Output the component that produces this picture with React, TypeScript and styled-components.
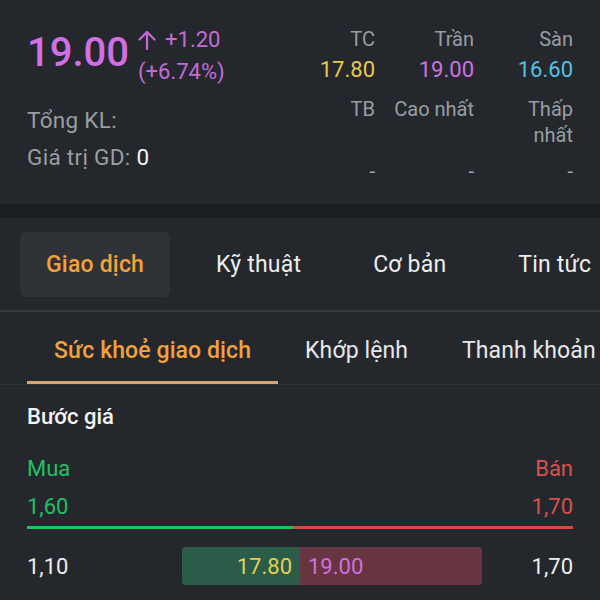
import React from 'react';
import styled, { createGlobalStyle } from 'styled-components';

const Global = createGlobalStyle`
  body {
    margin: 0;
    background: #24282d;
    font-family: Roboto, "Liberation Sans", sans-serif;
  }
`;

const Page = styled.div`
  width: 600px;
  height: 600px;
  overflow: hidden;
  background: #24282d;
  color: #e8e9ea;
`;

const Top = styled.div`
  height: 204px;
  box-sizing: border-box;
  padding: 24px 27px 0 27px;
  display: flex;
  justify-content: space-between;
`;

const PriceRow = styled.div`
  display: flex;
  align-items: flex-start;
`;

const BigPrice = styled.div`
  margin-top: 5px;
  font-size: 40px;
  line-height: 48px;
  font-weight: 500;
  color: #d36fe6;
`;

const Change = styled.div`
  margin-left: 9px;
  font-size: 22px;
  line-height: 32px;
  color: #c56ad8;
`;

const ChangeLine = styled.div`
  display: flex;
  align-items: center;
  gap: 9px;
`;

const InfoLine = styled.div<{ $first?: boolean }>`
  margin-top: ${(p) => (p.$first ? '14px' : '0')};
  font-size: 22.5px;
  line-height: 37px;
  letter-spacing: 0.3px;
  color: #9a9ea3;
`;

const White = styled.span`
  color: #f2f2f2;
`;

const Stats = styled.div`
  margin-top: 2px;
  display: grid;
  grid-template-columns: repeat(3, 86px);
  column-gap: 13px;
  text-align: right;
  align-content: start;
`;

const Label = styled.div<{ $gap?: number }>`
  margin-top: ${(p) => p.$gap ?? 0}px;
  font-size: 20px;
  line-height: 26px;
  color: #9a9ea3;
`;

const Value = styled.div<{ $color: string }>`
  margin-top: 3px;
  font-size: 22px;
  line-height: 30px;
  color: ${(p) => p.$color};
`;

const Dash = styled.div`
  margin-top: 10px;
  font-size: 20px;
  line-height: 26px;
  color: #a5a8ac;
`;

const Band = styled.div`
  height: 14px;
  background: #1b1e22;
`;

const MainTabs = styled.div`
  display: flex;
  gap: 20px;
  padding: 14px 0 13px 20px;
  border-bottom: 2px solid #353a41;
  white-space: nowrap;
`;

const MainTab = styled.div<{ $active?: boolean }>`
  height: 65px;
  padding: 0 26px;
  display: flex;
  align-items: center;
  border-radius: 6px;
  font-size: 23px;
  letter-spacing: 0.2px;
  font-weight: ${(p) => (p.$active ? 500 : 400)};
  color: ${(p) => (p.$active ? '#f2a23a' : '#eceded')};
  background: ${(p) => (p.$active ? '#2f3337' : 'transparent')};
`;

const SubTabs = styled.div`
  display: flex;
  padding-left: 27px;
  border-bottom: 1px solid #30353b;
  white-space: nowrap;
`;

const SubTab = styled.div<{ $active?: boolean }>`
  padding: 26px 27px 17px;
  font-size: 23px;
  line-height: 26px;
  letter-spacing: 0.1px;
  font-weight: ${(p) => (p.$active ? 500 : 400)};
  color: ${(p) => (p.$active ? '#f2a23a' : '#e6e7e8')};
  border-bottom: 3px solid ${(p) => (p.$active ? '#d7a472' : 'transparent')};
`;

const Content = styled.div`
  padding: 0 27px;
`;

const Heading = styled.div`
  margin-top: 18px;
  font-size: 22px;
  line-height: 28px;
  font-weight: 500;
  color: #f4f4f4;
`;

const SideRow = styled.div<{ $gap: number }>`
  margin-top: ${(p) => p.$gap}px;
  display: flex;
  justify-content: space-between;
  font-size: 22px;
  line-height: 28px;
`;

const Buy = styled.span`
  color: #22c063;
`;

const Sell = styled.span`
  color: #d8514c;
`;

const Balance = styled.div`
  margin-top: 5px;
  height: 3px;
  display: flex;
`;

const BalancePart = styled.div<{ $color: string }>`
  background: ${(p) => p.$color};
`;

const BookRow = styled.div`
  margin-top: 18px;
  display: grid;
  grid-template-columns: 155px 300px 1fr;
  align-items: center;
  font-size: 22px;
  color: #eeeeee;
`;

const EndValue = styled.div<{ $right?: boolean }>`
  text-align: ${(p) => (p.$right ? 'right' : 'left')};
`;

const Bar = styled.div`
  height: 38px;
  display: flex;
  border-radius: 3px;
  overflow: hidden;
`;

const BarPart = styled.div<{ $bg: string; $color: string; $right?: boolean }>`
  display: flex;
  align-items: center;
  justify-content: ${(p) => (p.$right ? 'flex-end' : 'flex-start')};
  padding: 0 8px;
  box-sizing: border-box;
  background: ${(p) => p.$bg};
  color: ${(p) => p.$color};
`;

const UpArrow = () => (
  <svg width="18" height="20" viewBox="0 0 18 20" fill="none" stroke="#c56ad8" strokeWidth="2.2" strokeLinecap="round" strokeLinejoin="round">
    <path d="M9 19V2" />
    <path d="M1.5 9.5L9 2l7.5 7.5" />
  </svg>
);

export default function App() {
  return (
    <Page>
      <Global />
      <Top>
        <div>
          <PriceRow>
            <BigPrice>19.00</BigPrice>
            <Change>
              <ChangeLine>
                <UpArrow />
                <span>+1.20</span>
              </ChangeLine>
              <div>(+6.74%)</div>
            </Change>
          </PriceRow>
          <InfoLine $first>Tổng KL:</InfoLine>
          <InfoLine>
            Giá trị GD: <White>0</White>
          </InfoLine>
        </div>
        <Stats>
          <Label>TC</Label>
          <Label>Trần</Label>
          <Label>Sàn</Label>
          <Value $color="#e9c84b">17.80</Value>
          <Value $color="#d070e3">19.00</Value>
          <Value $color="#52c1e2">16.60</Value>
          <Label $gap={11}>TB</Label>
          <Label $gap={11}>Cao nhất</Label>
          <Label $gap={11}>Thấp nhất</Label>
          <Dash>-</Dash>
          <Dash>-</Dash>
          <Dash>-</Dash>
        </Stats>
      </Top>
      <Band />
      <MainTabs>
        <MainTab $active>Giao dịch</MainTab>
        <MainTab>Kỹ thuật</MainTab>
        <MainTab>Cơ bản</MainTab>
        <MainTab>Tin tức</MainTab>
      </MainTabs>
      <SubTabs>
        <SubTab $active>Sức khoẻ giao dịch</SubTab>
        <SubTab>Khớp lệnh</SubTab>
        <SubTab>Thanh khoản</SubTab>
      </SubTabs>
      <Content>
        <Heading>Bước giá</Heading>
        <SideRow $gap={24}>
          <Buy>Mua</Buy>
          <Sell>Bán</Sell>
        </SideRow>
        <SideRow $gap={10}>
          <Buy>1,60</Buy>
          <Sell>1,70</Sell>
        </SideRow>
        <Balance>
          <BalancePart $color="#1ec264" style={{ width: `${(266 / 546) * 100}%` }} />
          <BalancePart $color="#d84a43" style={{ flex: 1 }} />
        </Balance>
        <BookRow>
          <EndValue>1,10</EndValue>
          <Bar>
            <BarPart $bg="#2b5b49" $color="#e4cf52" $right style={{ width: '118px' }}>
              17.80
            </BarPart>
            <BarPart $bg="#673540" $color="#d070e3" style={{ flex: 1 }}>
              19.00
            </BarPart>
          </Bar>
          <EndValue $right>1,70</EndValue>
        </BookRow>
      </Content>
    </Page>
  );
}
